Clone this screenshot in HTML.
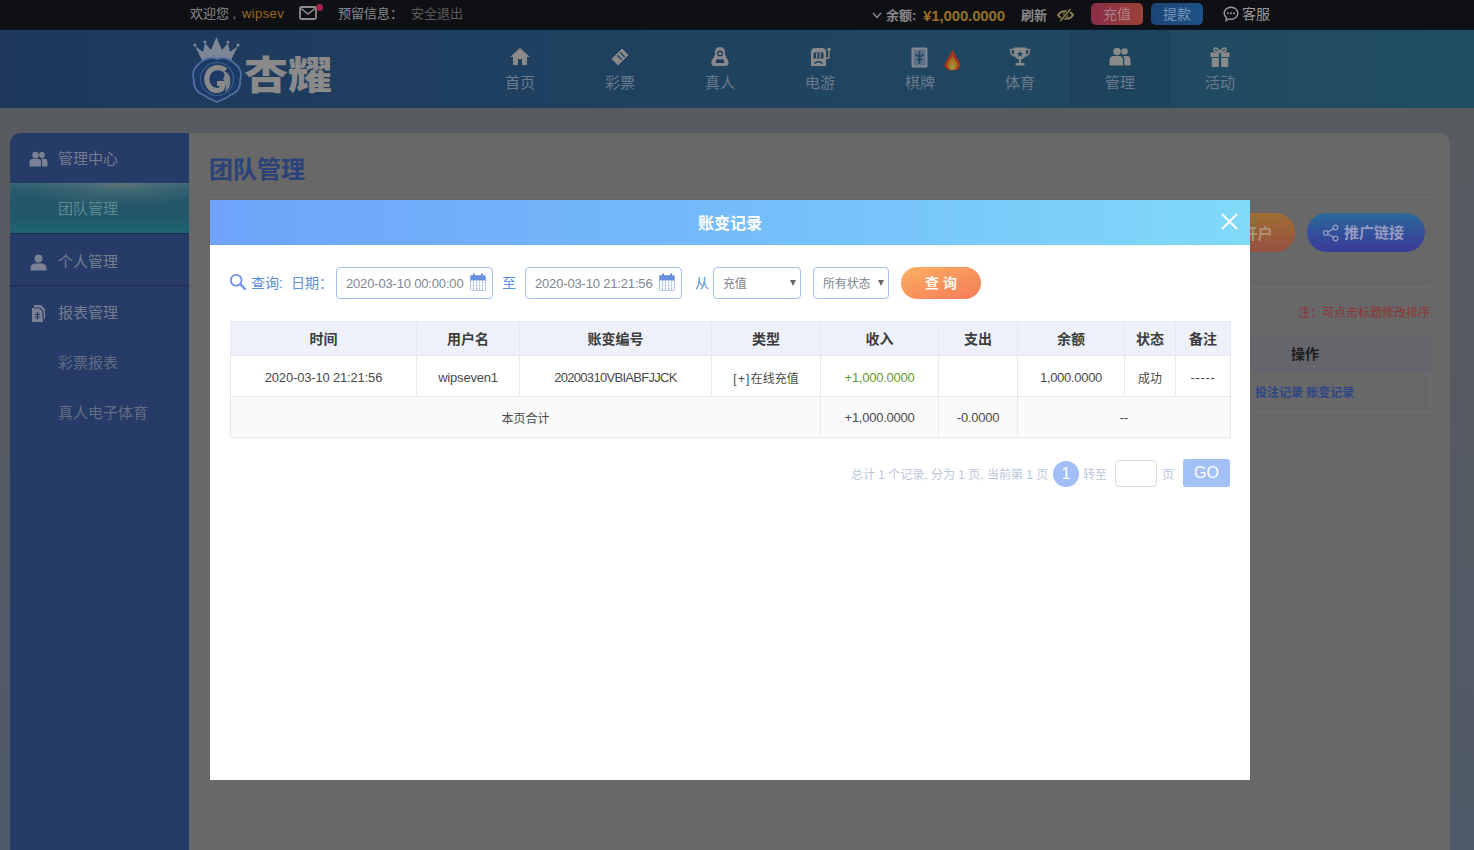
<!DOCTYPE html>
<html lang="zh-CN">
<head>
<meta charset="utf-8">
<title>团队管理</title>
<style>

*{box-sizing:border-box;margin:0;padding:0}
html,body{width:1474px;height:850px;overflow:hidden}
body{position:relative;background:#585b60;font-family:"Liberation Sans","Noto Sans CJK SC",sans-serif;font-size:13px;color:#333}
.a{position:absolute;white-space:nowrap}
svg{position:absolute;overflow:visible}
#pagebg{left:0;top:108px;width:1474px;height:742px;background:linear-gradient(180deg,#585b60 0%,#565b63 40%,#4e5a68 100%)}
#topbar{left:0;top:0;width:1474px;height:30px;background:#0e1014;border-bottom:1px solid #07172c;color:#8c8c8c;font-size:13px}
#topbar .t{position:absolute;white-space:nowrap;line-height:20px;height:20px}
#header{left:0;top:30px;width:1474px;height:78px;background:linear-gradient(90deg,#1e385e 0%,#214e62 100%)}
.nav{position:absolute;top:0;width:100px;height:78px;color:#6b7a8c;font-size:15px}
.nav svg{left:39px;top:16px;width:22px;height:22px}
.nav b{position:absolute;left:0;top:42px;width:100px;text-align:center;font-weight:normal;line-height:22px}
.nav.on{background:rgba(10,30,60,.1)}
#wrap{left:10px;top:133px;width:1440px;height:717px;background:#686868;border-radius:10px 10px 0 0;overflow:hidden}
#side{left:0;top:0;width:179px;height:717px;background:#263b67;color:#747c90;font-size:15px}
.si{position:absolute;left:0;width:179px;height:50px;line-height:50px;padding-left:48px;white-space:nowrap}
.si svg{left:19px;top:16px;width:19px;height:19px}
.si.on{background:radial-gradient(ellipse 55% 48% at 62% 0%,rgba(112,128,126,.62) 0%,rgba(112,128,126,.25) 45%,rgba(112,128,126,0) 100%),linear-gradient(180deg,#3a6676 0%,#2a5c6e 12%,#245669 40%,#22596a 70%,#1f6672 100%);color:#5d8892}
.sep{position:absolute;left:0;width:179px;height:1px;background:#1a2a50}
#modal{left:210px;top:200px;width:1040px;height:580px;background:#fff}
#mhead{left:0;top:0;width:1040px;height:44.5px;background:linear-gradient(90deg,#6ea3f9 0%,#74bcfa 50%,#80daf9 100%);color:#fff;text-align:center;font-size:16px;font-weight:bold;line-height:47.500px}
.lbl{position:absolute;top:67.5px;height:31px;line-height:31px;color:#5a8ee0;font-size:14px;white-space:nowrap}
.inp{position:absolute;top:67px;height:32px;border:1px solid #a0bfec;border-radius:4px;background:#fff;color:#7d8694;font-size:13px;line-height:32px;padding-left:9px;white-space:nowrap;letter-spacing:-.17px}
table{position:absolute;left:20px;top:121px;width:1000px;border-collapse:collapse;table-layout:fixed;font-size:13px;color:#4a4a4a}
td,th{border:1px solid #e8e9ee;text-align:center;white-space:nowrap;overflow:hidden;padding:0}
th{height:34px;padding-bottom:2px;background:#eef1fa;font-size:14px;font-weight:bold;color:#3c3c3c;border-color:#e6e9f3}
td{height:40.5px;padding-top:3px}
tr.tot td{background:#fafafa;height:41.500px;padding-top:2px}
.pg{position:absolute;color:#bac7dc;font-size:12px;line-height:20px;height:20px;white-space:nowrap}
</style>
</head>
<body>
<div id="pagebg" class="a"></div>

<!-- top bar -->
<div id="topbar" class="a">
  <span class="t" style="left:190px;top:4px">欢迎您 ,</span><span class="t" style="left:242px;top:4px;color:#9a6c22;letter-spacing:.4px">wipsev</span>
  <svg style="left:299px;top:6px;width:18px;height:14px" viewBox="0 0 18 14"><rect x="1" y="1" width="16" height="12" rx="1.5" fill="none" stroke="#8c8c8c" stroke-width="1.8"/><path d="M1.5 2 L9 8 L16.5 2" fill="none" stroke="#8c8c8c" stroke-width="1.6"/></svg>
  <span class="a" style="left:316px;top:4px;width:7px;height:7px;border-radius:4px;background:#a8224a"></span>
  <span class="t" style="left:338px;top:4px;color:#8a8a8a">预留信息：</span>
  <span class="t" style="left:411px;top:4px;color:#5c5c5c">安全退出</span>

  <svg style="left:872px;top:12px;width:10px;height:7px" viewBox="0 0 10 7"><path d="M1 1 L5 5.5 L9 1" fill="none" stroke="#8c8c8c" stroke-width="1.4"/></svg>
  <span class="t" style="left:886px;top:6px;font-weight:bold;color:#8a8a8a">余额:</span>
  <span class="t" style="left:923px;top:6px;font-weight:bold;color:#9a7026;font-size:15px;letter-spacing:-.13px">¥1,000.0000</span>
  <span class="t" style="left:1021px;top:6px;font-weight:bold;color:#8a8a8a">刷新</span>
  <svg style="left:1057px;top:8px;width:17px;height:14px" viewBox="0 0 17 14"><path d="M1 7 C4 2 13 2 16 7 C13 12 4 12 1 7 Z" fill="none" stroke="#8a8052" stroke-width="2"/><circle cx="8.5" cy="7" r="2.6" fill="#8a8052"/><path d="M3.5 13 L13.5 1" stroke="#0e1014" stroke-width="3.2"/><path d="M3.5 13 L13.5 1" stroke="#8a8052" stroke-width="1.5"/></svg>
  <span class="a" style="left:1091px;top:3px;width:52px;height:22px;border-radius:5px;background:linear-gradient(90deg,#8a2c46 0%,#984238 100%);color:#ae8088;font-size:14px;line-height:22px;text-align:center">充值</span>
  <span class="a" style="left:1151px;top:3px;width:52px;height:22px;border-radius:5px;background:linear-gradient(90deg,#1b4578 0%,#1e5284 100%);color:#7894b8;font-size:14px;line-height:22px;text-align:center">提款</span>
  <svg style="left:1223px;top:6px;width:16px;height:16px" viewBox="0 0 16 16"><path d="M8 1.2 C11.9 1.2 14.8 3.9 14.8 7.2 C14.8 10.5 11.9 13.2 8 13.2 C7.2 13.2 6.5 13.1 5.8 12.9 L3 14.6 L3.4 11.7 C2 10.6 1.2 9 1.2 7.2 C1.2 3.9 4.1 1.2 8 1.2 Z" fill="none" stroke="#9a9a9a" stroke-width="1.4"/><circle cx="5" cy="7.3" r="1" fill="#9a9a9a"/><circle cx="8" cy="7.3" r="1" fill="#9a9a9a"/><circle cx="11" cy="7.3" r="1" fill="#9a9a9a"/></svg>
  <span class="t" style="left:1242px;top:4px;font-size:14px;color:#9a9a9a">客服</span>
</div>

<!-- header -->
<div id="header" class="a">
  <!-- logo -->
  <svg style="left:190px;top:5px;width:150px;height:70px" viewBox="0 0 150 70">
    <path d="M12 25 L5 11 L13 17 L15 8 L21 15 L26.500 2 L32 15 L38 8 L40 17 L48 11 L41 25 Z" fill="#7d8798"/>
    <circle cx="5" cy="10" r="1.600" fill="#7d8798"/><circle cx="48" cy="10" r="1.600" fill="#7d8798"/><circle cx="15" cy="7" r="1.500" fill="#7d8798"/><circle cx="38" cy="7" r="1.500" fill="#7d8798"/>
    <path d="M27 24 C20 21 12 25 9 29 C3 33 2 40 4 46 C3 53 9 59 14 60 C18 64 23 65 27 67 C31 65 36 64 40 60 C45 59 51 53 50 46 C52 40 51 33 45 29 C42 25 34 21 27 24 Z" fill="#1c3a66" stroke="#5270a0" stroke-width="1.700"/>
    <circle cx="27" cy="44" r="16.500" fill="none" stroke="#3f5c8c" stroke-width="1.200"/>
    <path d="M35.500 35.500 C30 30.500 20 32 17.500 40 C15 48 20 55.500 27 55.500 C31 55.500 33 53 33.500 48.500 L27 48.500" fill="none" stroke="#8a8a8a" stroke-width="5.200"/>
    <path d="M33 36 C38 37 41 41 40 46 C41 50 39 54 35 57 C37 52 36 47 33 44 C35 42 35 39 33 36 Z" fill="#808489"/>
    <text x="54" y="53.500" font-family="'Liberation Sans','Noto Sans CJK SC',sans-serif" font-weight="900" font-size="39" fill="#8a8a8a" textLength="88" lengthAdjust="spacingAndGlyphs">杏耀</text>
  </svg>

  <div class="nav" style="left:470px"><svg viewBox="0 0 22 22"><path d="M11 2 L1 11 L4 11 L4 19 L9 19 L9 13 L13 13 L13 19 L18 19 L18 11 L21 11 Z" fill="#8a8a8a"/></svg><b>首页</b></div>
  <div class="nav" style="left:570px"><svg viewBox="0 0 22 22"><path d="M13 1.5 L20.5 9 L9 20.5 L1.5 13 Z M8.2 9.2 L12.8 13.8 M11 6.4 L15.6 11" fill="#8a8a8a" stroke="#1e3c5f" stroke-width="1.3"/></svg><b>彩票</b></div>
  <div class="nav" style="left:670px"><svg viewBox="0 0 22 22"><path d="M11 1 C7 1 5.5 4.5 6 8 C5 12 3 13 2.5 16 C2 19 4 20 6 20 L16 20 C18 20 20 19 19.500 16 C19 13 17 12 16 8 C16.500 4.500 15 1 11 1 Z" fill="#8a8a8a"/><circle cx="11" cy="7.500" r="3" fill="#1e3d5f"/><path d="M6.500 17 C7 13 9 12 11 14 C13 12 15 13 15.500 17 Z" fill="#1e3d5f"/><circle cx="11" cy="7.500" r="1.600" fill="#8a8a8a"/></svg><b>真人</b></div>
  <div class="nav" style="left:770px"><svg viewBox="0 0 22 22"><path d="M2 6 C2 3 4 2 6 2 L13 2 C15 2 17 3 17 6 L17 20 L2 20 Z" fill="#8a8a8a"/><rect x="4.500" y="6.500" width="10" height="6" rx="1" fill="#1e3f60"/><path d="M7.800 7 L7.800 12 M11.200 7 L11.200 12" stroke="#8a8a8a" stroke-width="1.300"/><path d="M5.500 17.500 C7.500 15 11.500 15 13.500 17.500" stroke="#1e3f60" stroke-width="1.500" fill="none"/><path d="M17 12 L20 12 L20 4" stroke="#8a8a8a" stroke-width="1.400" fill="none"/><circle cx="20" cy="3.500" r="1.700" fill="#8a8a8a"/></svg><b>电游</b></div>
  <div class="nav" style="left:870px"><svg viewBox="0 0 22 22"><rect x="2.500" y="1.500" width="16" height="20" rx="1.500" fill="#828a96"/><rect x="4.500" y="3.500" width="12" height="16" fill="#5f7088"/><path d="M10.500 5 L10.500 18 M7 8 C7 11 14 11 14 8 M7.500 13.500 L13.500 13.500" stroke="#1f4160" stroke-width="1.500" fill="none"/></svg><b>棋牌</b>
    <svg style="left:73px;top:19px;width:19px;height:22px" viewBox="0 0 19 22"><path d="M9.500 0 C10.500 4 14 8 16.500 13 C19 18 16 21.500 9.500 21.500 C3 21.500 0 18 2.500 13 C5 8 8.500 4 9.500 0 Z" fill="#a03422"/><path d="M9.500 7 C10.500 10 14 12 14.500 15.500 C15 19 12.500 21 9.500 21 C6.500 21 4 19 4.500 15.500 C5 12 8.500 10 9.500 7 Z" fill="#a8741e"/><path d="M9.500 13 C10 15 12 16 12 18 C12 20 11 21 9.500 21 C8 21 7 20 7 18 C7 16 9 15 9.500 13 Z" fill="#9e9040"/></svg>
  </div>
  <div class="nav" style="left:970px"><svg viewBox="0 0 22 22"><path d="M5 1.500 L17 1.500 L17 7 C17 11 14.500 13.500 11 13.500 C7.500 13.500 5 11 5 7 Z" fill="#8a8a8a"/><path d="M5 3.500 L1.500 3.500 C1.500 7.500 3 9.500 6 10 M17 3.500 L20.500 3.500 C20.500 7.500 19 9.500 16 10" fill="none" stroke="#8a8a8a" stroke-width="1.500"/><rect x="10" y="13" width="2" height="4" fill="#8a8a8a"/><rect x="6.500" y="17" width="9" height="2.500" rx="1" fill="#8a8a8a"/><path d="M11 4.500 L12 7 L14.500 7 L12.500 8.600 L13.300 11 L11 9.500 L8.700 11 L9.500 8.600 L7.500 7 L10 7 Z" fill="#204560"/></svg><b>体育</b></div>
  <div class="nav on" style="left:1070px"><svg viewBox="0 0 22 22"><circle cx="8" cy="5.500" r="3.800" fill="#8a8a8a"/><circle cx="15.500" cy="5.500" r="3.300" fill="#8a8a8a"/><path d="M0.500 19.500 L0.500 14 C0.500 11.500 2.500 10 5 10 L10 10 C12.500 10 14 11.500 14 14 L14 19.500 Z" fill="#8a8a8a"/><path d="M15.300 19.500 L15.300 13 C15.300 11.800 14.800 10.800 14 10 L18 10 C20 10 21.500 11.500 21.500 14 L21.500 19.500 Z" fill="#8a8a8a"/></svg><b>管理</b></div>
  <div class="nav" style="left:1170px"><svg viewBox="0 0 22 22"><rect x="1.500" y="6.500" width="19" height="4.500" fill="#8a8a8a"/><rect x="2.800" y="12" width="16.400" height="9" fill="#8a8a8a"/><rect x="9.800" y="6.500" width="2.400" height="14.500" fill="#204a61"/><path d="M11 6 C9 2 5 1 5 3.500 C5 5.500 8 6 11 6 C14 6 17 5.500 17 3.500 C17 1 13 2 11 6 Z" fill="none" stroke="#8a8a8a" stroke-width="1.600"/></svg><b>活动</b></div>
</div>

<!-- content wrap -->
<div id="wrap" class="a">
  <div id="side" class="a">
    <div class="si" style="top:1px"><svg viewBox="0 0 19 19"><circle cx="6.500" cy="5" r="3.200" fill="#7a8194"/><circle cx="13" cy="5" r="2.900" fill="#7a8194"/><path d="M0.500 16.500 L0.500 12 C0.500 10 2 8.800 4 8.800 L8.500 8.800 C10.500 8.800 12 10 12 12 L12 16.500 Z" fill="#7a8194"/><path d="M13 16.500 L13 11.500 C13 10.500 12.600 9.500 12 8.800 L15.500 8.800 C17.300 8.800 18.500 10 18.500 12 L18.500 16.500 Z" fill="#7a8194"/></svg>管理中心</div>
        <div class="si on" style="top:50px;height:50px;line-height:51px">团队管理</div>
    <div class="sep" style="top:100px"></div>
    <div class="si" style="top:103.500px"><svg viewBox="0 0 19 19"><circle cx="9.500" cy="5.500" r="4" fill="#7a8194"/><path d="M1.500 17.500 L1.500 15 C1.500 12 4 10.500 6.500 10.500 L12.500 10.500 C15 10.500 17.500 12 17.500 15 L17.500 17.500 Z" fill="#7a8194"/></svg>个人管理</div>
    <div class="sep" style="top:152px"></div>
    <div class="si" style="top:155px"><svg viewBox="0 0 19 19"><path d="M5 1 L12 1 L16 5 L16 15 L14 15 L14 18 L3 18 L3 4 L5 4 Z" fill="#7a8194"/><path d="M5 4 L11 4 L14 7 L14 15" fill="none" stroke="#263a64" stroke-width="1.200"/><path d="M6 10.500 L11 10.500 M6 13 L11 13 M8.500 8 L8.500 15.500" stroke="#263a64" stroke-width="1.200"/></svg>报表管理</div>
    <div class="si" style="top:205px;color:#626b84">彩票报表</div>
    <div class="si" style="top:255px;color:#626b84">真人电子体育</div>
  </div>

  <!-- main (behind modal) -->
  <div class="a" style="left:199px;top:22px;font-size:24px;font-weight:bold;color:#2a4279;line-height:30px;letter-spacing:0">团队管理</div>
  <div class="a" style="left:199px;top:64px;width:1222px;height:1px;background:#707070"></div>
  <div class="a" style="left:1180px;top:80px;width:105px;height:39px;border-radius:20px;background:linear-gradient(180deg,#a06e34 0%,#975040 100%);color:#b39078;font-size:15px;font-weight:bold;line-height:41px;text-align:center;padding-left:30px">开户</div>
  <div class="a" style="left:1297px;top:80px;width:118px;height:39px;border-radius:20px;background:linear-gradient(180deg,#2c6a98 0%,#33509a 50%,#3a3c98 100%);color:#949bc2;font-size:15px;font-weight:bold;line-height:40px;padding-left:37px">推广链接
    <svg style="left:15px;top:11px;width:18px;height:18px" viewBox="0 0 18 18"><g fill="none" stroke="#949bc2" stroke-width="1.300"><circle cx="3.800" cy="9" r="2.300"/><circle cx="13.500" cy="3.500" r="2.300"/><circle cx="13.500" cy="14.500" r="2.300"/><path d="M5.800 8 L11.500 4.600 M5.800 10 L11.500 13.400"/></g></svg>
  </div>
  <div class="a" style="left:199px;top:154px;width:1222px;height:1px;background:#6f6f6f"></div>
  <div class="a" style="left:1200px;top:170.500px;width:220px;text-align:right;font-size:12px;line-height:18px;color:#8c3636">注：可点击标题修改排序</div>
  <div class="a" style="left:1000px;top:204px;width:421px;height:35px;background:#64666c"></div>
  <div class="a" style="left:1270px;top:204px;width:50px;height:35px;text-align:center;line-height:35px;font-size:14px;font-weight:bold;color:#1c1c1c">操作</div>
  <div class="a" style="left:1000px;top:239px;width:421px;height:41px;border:1px solid #707070;border-top:none"></div>
  <div class="a" style="left:1245px;top:250px;font-size:12px;line-height:20px;color:#2e4686;font-weight:bold">投注记录 账变记录</div>
</div>

<!-- modal -->
<div id="modal" class="a">
  <div id="mhead" class="a">账变记录</div>
  <svg style="left:1010.500px;top:13px;width:17px;height:17px" viewBox="0 0 17 17"><path d="M1 1 L16 16 M16 1 L1 16" stroke="#fff" stroke-width="1.900" fill="none"/></svg>

  <svg style="left:19px;top:73px;width:18px;height:18px" viewBox="0 0 18 18"><circle cx="7.200" cy="7.200" r="5.400" fill="none" stroke="#7490e2" stroke-width="1.800"/><path d="M11.200 11.200 L16 16" stroke="#7490e2" stroke-width="2.400" stroke-linecap="round"/></svg>
  <span class="lbl" style="left:41px">查询:</span>
  <span class="lbl" style="left:81px">日期：</span>
  <div class="inp" style="left:126px;width:157px">2020-03-10 00:00:00</div>
  <svg class="cal" style="left:260px;top:73px;width:16px;height:18px" viewBox="0 0 16 18"><rect x="0.500" y="2.500" width="15" height="15" rx="1" fill="#fff" stroke="#a8c0ea"/><rect x="0.500" y="2.500" width="15" height="5" fill="#6a90de"/><rect x="3" y="0.500" width="2" height="4" fill="#6a90de"/><rect x="11" y="0.500" width="2" height="4" fill="#6a90de"/><path d="M3.500 8.500 V16.500 M6.500 8.500 V16.500 M9.500 8.500 V16.500 M12.500 8.500 V16.500" stroke="#a6b8de" stroke-width="1.300"/><path d="M1 11 H15 M1 14 H15" stroke="#fff" stroke-width="0.800"/></svg>
  <span class="lbl" style="left:292px">至</span>
  <div class="inp" style="left:315px;width:157px">2020-03-10 21:21:56</div>
  <svg class="cal" style="left:449px;top:73px;width:16px;height:18px" viewBox="0 0 16 18"><rect x="0.500" y="2.500" width="15" height="15" rx="1" fill="#fff" stroke="#a8c0ea"/><rect x="0.500" y="2.500" width="15" height="5" fill="#6a90de"/><rect x="3" y="0.500" width="2" height="4" fill="#6a90de"/><rect x="11" y="0.500" width="2" height="4" fill="#6a90de"/><path d="M3.500 8.500 V16.500 M6.500 8.500 V16.500 M9.500 8.500 V16.500 M12.500 8.500 V16.500" stroke="#a6b8de" stroke-width="1.300"/><path d="M1 11 H15 M1 14 H15" stroke="#fff" stroke-width="0.800"/></svg>
  <span class="lbl" style="left:485px">从</span>
  <div class="inp" style="left:503px;width:88px;font-size:12px">充值<svg style="left:76px;top:12px;width:6px;height:6px" viewBox="0 0 6 6"><path d="M0 0 L6 0 L3 6 Z" fill="#666"/></svg></div>
  <div class="inp" style="left:603px;width:76px;font-size:12px">所有状态<svg style="left:64px;top:12px;width:6px;height:6px" viewBox="0 0 6 6"><path d="M0 0 L6 0 L3 6 Z" fill="#666"/></svg></div>
  <div class="a" style="left:691px;top:67px;width:80px;height:32px;border-radius:16px;background:linear-gradient(160deg,#fbb262 0%,#f8945c 50%,#f47c5a 100%);color:#fff7f0;font-size:14px;font-weight:bold;line-height:32px;text-align:center">查 询</div>

  <table>
    <colgroup><col style="width:186px"><col style="width:103px"><col style="width:192px"><col style="width:109px"><col style="width:118px"><col style="width:79px"><col style="width:107px"><col style="width:51px"><col style="width:55px"></colgroup>
    <tr><th>时间</th><th>用户名</th><th>账变编号</th><th>类型</th><th>收入</th><th>支出</th><th>余额</th><th>状态</th><th>备注</th></tr>
    <tr><td style="letter-spacing:-.17px">2020-03-10 21:21:56</td><td style="letter-spacing:-.2px">wipseven1</td><td style="letter-spacing:-.7px">20200310VBIABFJJCK</td><td style="font-size:12px"><span style="letter-spacing:1.2px">[+]</span>在线充值</td><td style="color:#6b9a2a;letter-spacing:-.25px">+1,000.0000</td><td></td><td style="letter-spacing:-.3px">1,000.0000</td><td style="font-size:12px">成功</td><td style="letter-spacing:.65px">-----</td></tr>
    <tr class="tot"><td colspan="4" style="font-size:12px">本页合计</td><td style="letter-spacing:-.25px">+1,000.0000</td><td style="letter-spacing:-.25px">-0.0000</td><td colspan="3">--</td></tr>
  </table>

  <span class="pg" style="left:641px;top:265px">总计 1 个记录, 分为 1 页, 当前第 1 页</span>
  <span class="a" style="left:843px;top:260.500px;width:26px;height:26px;border-radius:13px;background:#a1bff6;color:#fff;font-size:16px;line-height:26px;text-align:center">1</span>
  <span class="pg" style="left:873px;top:265px">转至</span>
  <span class="a" style="left:905px;top:260px;width:42px;height:27px;border:1px solid #d9dbe3;border-radius:4px;background:#fff"></span>
  <span class="pg" style="left:952px;top:265px">页</span>
  <span class="a" style="left:973px;top:259px;width:47px;height:28px;border-radius:3px;background:#a3c0f7;color:#fff;font-size:16px;line-height:28px;text-align:center">GO</span>
</div>
</body>
</html>
